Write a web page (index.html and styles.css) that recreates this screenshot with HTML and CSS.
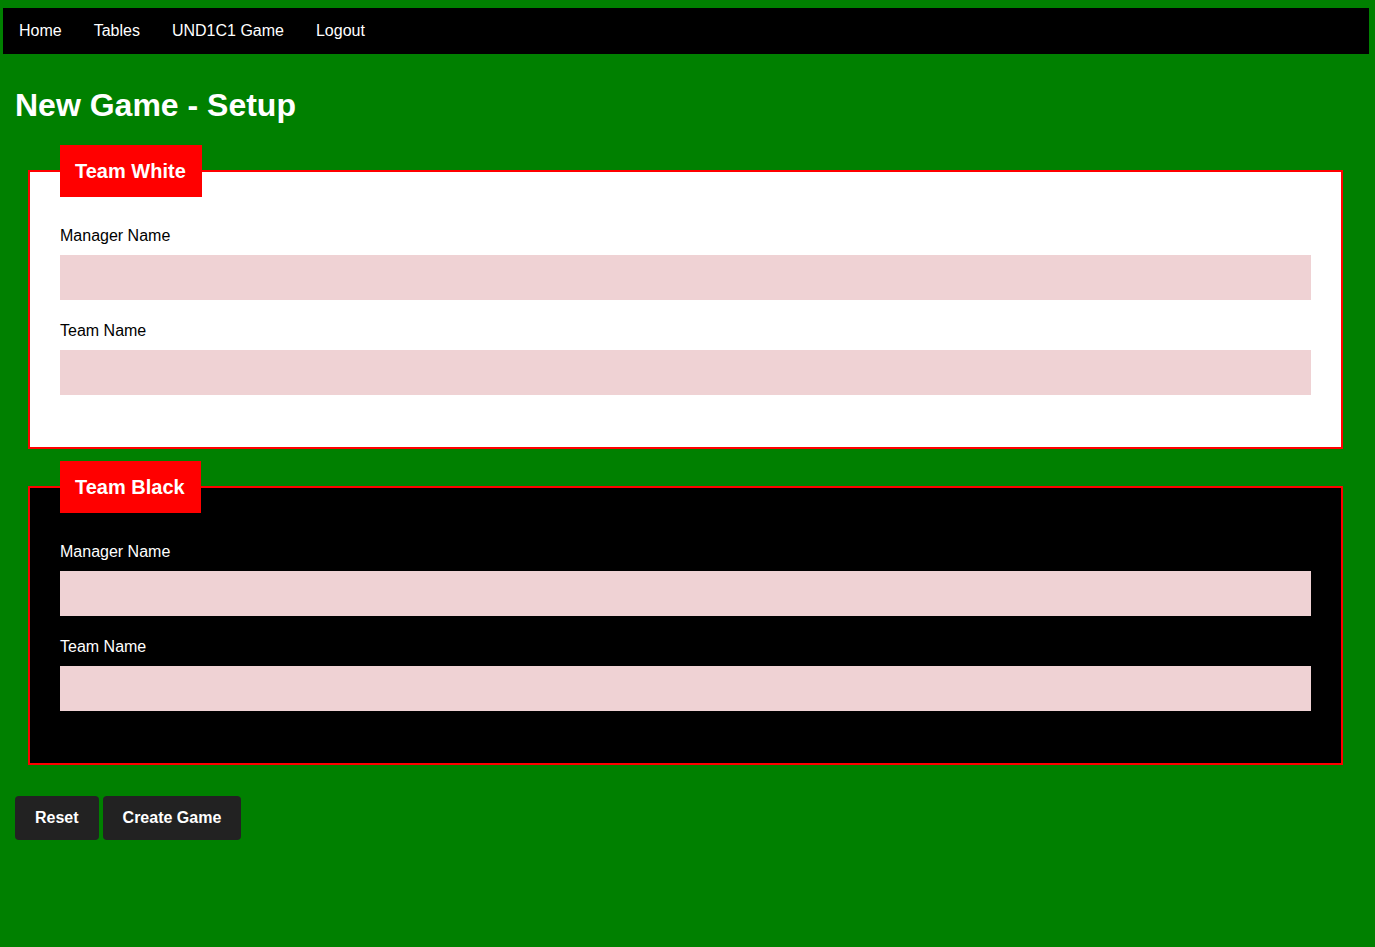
FILE: index.html
```html
<!DOCTYPE html>
<html lang="en">
<head>
<meta charset="utf-8">
<title>New Game - Setup</title>
<link rel="stylesheet" href="styles.css">
</head>
<body>
<nav class="topnav">
  <a href="#">Home</a>
  <a href="#">Tables</a>
  <a href="#">UND1C1 Game</a>
  <a href="#">Logout</a>
</nav>
<main class="content">
  <h1 class="title">New Game - Setup</h1>
  <form class="setup-form">
    <fieldset class="team team-white">
      <legend class="team-legend">Team White</legend>
      <label class="field-label" for="wm">Manager Name</label>
      <input class="field-input" id="wm" type="text">
      <label class="field-label" for="wt">Team Name</label>
      <input class="field-input" id="wt" type="text">
    </fieldset>
    <fieldset class="team team-black">
      <legend class="team-legend">Team Black</legend>
      <label class="field-label" for="bm">Manager Name</label>
      <input class="field-input" id="bm" type="text">
      <label class="field-label" for="bt">Team Name</label>
      <input class="field-input" id="bt" type="text">
    </fieldset>
    <div class="actions">
      <button class="btn" type="reset">Reset</button>
      <button class="btn" type="submit">Create Game</button>
    </div>
  </form>
</main>
</body>
</html>
```

FILE: styles.css
```css
html, body {
  margin: 0;
  background: #008000;
}
body {
  padding: 8px 6px 0 3px;
  font-family: "Liberation Sans", Arial, sans-serif;
  font-size: 16px;
  color: #fff;
}
.topnav {
  display: flex;
  background: #000;
  height: 46px;
  align-items: center;
}
.topnav a {
  color: #fff;
  text-decoration: none;
  padding: 0 16px;
  font-size: 16px;
}
.content {
  padding: 0 12px;
}
.title {
  margin: 33px 0 21px;
  font-size: 32px;
  font-weight: bold;
  line-height: 37px;
  color: #fff;
}
.setup-form {
  margin: 0;
}
.team {
  margin: 0 14px 12px 13px;
  padding: 30px 30px 32px;
  border: 2px solid #f00;
  min-width: 0;
}
.team-white {
  background: #fff;
  color: #000;
}
.team-black {
  background: #000;
  color: #fff;
}
.team-legend {
  background: #f00;
  color: #fff;
  font-weight: bold;
  font-size: 20px;
  line-height: 22px;
  padding: 15px 16px 15px 15px;
}
.field-label {
  display: block;
  font-size: 16px;
  line-height: 18px;
  margin-bottom: 10px;
}
.field-input {
  display: block;
  box-sizing: border-box;
  width: 100%;
  height: 45px;
  border: none;
  background: #efd2d4;
  margin: 0 0 22px;
  padding: 0 10px;
  font-size: 16px;
  font-family: inherit;
}
.field-input:last-child {
  margin-bottom: 20px;
}
.actions {
  margin-top: 31px;
  display: flex;
  gap: 4px;
}
.btn {
  background: #222;
  color: #fff;
  border: none;
  border-radius: 4px;
  height: 44px;
  padding: 0 20px;
  font-family: inherit;
  font-size: 16px;
  font-weight: bold;
}
```
